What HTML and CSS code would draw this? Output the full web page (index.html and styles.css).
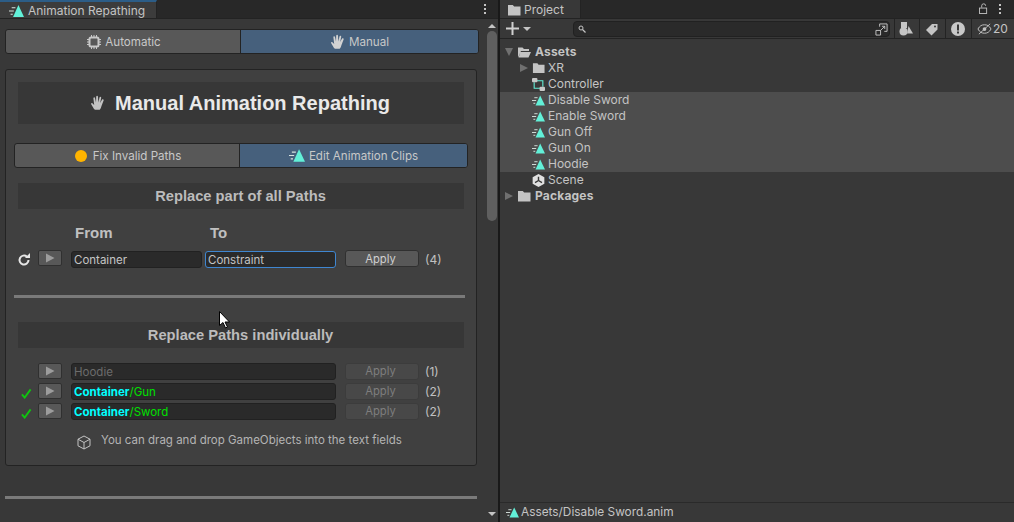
FILE: index.html
```html
<!DOCTYPE html>
<html lang="en">
<head>
<meta charset="utf-8">
<title>Animation Repathing</title>
<link rel="stylesheet" href="styles.css">
</head>
<body>
<svg class="defs" width="0" height="0">
  <symbol id="anim" viewBox="0 0 14 11">
    <path d="M8.800 0 14 11H3.800z" fill="#62f0d8"/>
    <path d="M2.500 2.500h3.500M0 5.500h4.500M1.500 8.500h2" stroke="#d8e4e0" stroke-width="1" fill="none"/>
  </symbol>
  <symbol id="hand" viewBox="0 0 16 16">
    <path d="M4 14 1.200 9.200c-.5-1 .8-1.700 1.400-.8L4.200 10 3.400 3.400c-.1-1.300 1.500-1.500 1.700-.2L6 7.500 6.200 1.800c.1-1.300 1.700-1.300 1.800 0L8.300 7.500 9.500 2.600c.3-1.200 1.900-.9 1.700.4L10.100 8l2-3.400c.6-1 2-.2 1.500.9L11.500 11c-.4 1.500-1 3-1.800 3.800H5z" fill="#d2d2d2"/>
  </symbol>
  <symbol id="folder" viewBox="0 0 14 12">
    <path d="M1 1h4.800l1.300 1.500H13.500V11.500H1z" fill="#c4c4c4"/>
  </symbol>
  <symbol id="play" viewBox="0 0 10 10">
    <path d="M1 .500l8.500 4.500L1 9.500z" fill="#9c9c9c"/>
  </symbol>
  <symbol id="check" viewBox="0 0 12 12">
    <path d="M1 7l3 3.500L10.500 1.500" stroke="#0fc40f" stroke-width="2" fill="none"/>
  </symbol>
</svg>

<div class="app">
  <section class="left">
    <header class="tabbar">
      <div class="tab tab-anim">
        <svg class="ic-anim ic-anim-tab"><use href="#anim"/></svg>
        <span>Animation Repathing</span>
      </div>
      <div class="kebab"><i></i><i></i><i></i></div>
    </header>
    <div class="left-body">
      <main class="content">
        <div class="toggle toggle-top">
          <div class="seg seg-a">
            <svg class="ic16" viewBox="0 0 16 16"><rect x="3.500" y="3.500" width="9" height="9" rx="1.500" fill="none" stroke="#c8c8c8" stroke-width="2"/><path d="M5.500 1v2M8 1v2M10.500 1v2M5.500 13v2M8 13v2M10.500 13v2M1 5.500h2M1 8h2M1 10.500h2M13 5.500h2M13 8h2M13 10.500h2" stroke="#c8c8c8"/></svg>
            <span>Automatic</span>
          </div>
          <div class="seg seg-on">
            <svg class="ic16"><use href="#hand"/></svg>
            <span>Manual</span>
          </div>
        </div>

        <div class="panel">
          <div class="title">
            <svg class="ic16 title-hand"><use href="#hand"/></svg>
            <span>Manual Animation Repathing</span>
          </div>

          <div class="toggle toggle-inner">
            <div class="seg seg-b">
              <i class="dot"></i>
              <span>Fix Invalid Paths</span>
            </div>
            <div class="seg seg-on">
              <svg class="ic-anim"><use href="#anim"/></svg>
              <span>Edit Animation Clips</span>
            </div>
          </div>

          <div class="sect">Replace part of all Paths</div>

          <div class="labels"><span class="lab-from">From</span><span>To</span></div>

          <div class="row row-all">
            <div class="lead">
              <svg class="ic-reload" viewBox="0 0 14 14"><path d="M11.500 7a4.500 4.500 0 1 1-1.500-3.300" fill="none" stroke="#e6e6e6" stroke-width="2"/><path d="M8 5h5V0z" fill="#e6e6e6"/></svg>
            </div>
            <button class="play"><svg class="ic-play"><use href="#play"/></svg></button>
            <div class="field field-half">Container</div>
            <div class="field field-half field-focus">Constraint</div>
            <button class="apply">Apply</button>
            <span class="count">(4)</span>
          </div>

          <div class="rule"></div>

          <div class="sect sect-2">Replace Paths individually</div>

          <div class="rows">
            <div class="row">
              <div class="lead"></div>
              <button class="play"><svg class="ic-play"><use href="#play"/></svg></button>
              <div class="field field-wide field-dim">Hoodie</div>
              <button class="apply apply-off">Apply</button>
              <span class="count">(1)</span>
            </div>
            <div class="row">
              <div class="lead"><svg class="ic-check"><use href="#check"/></svg></div>
              <button class="play"><svg class="ic-play"><use href="#play"/></svg></button>
              <div class="field field-wide"><b class="cy">Container</b><span class="gr">/Gun</span></div>
              <button class="apply apply-off">Apply</button>
              <span class="count">(2)</span>
            </div>
            <div class="row">
              <div class="lead"><svg class="ic-check"><use href="#check"/></svg></div>
              <button class="play"><svg class="ic-play"><use href="#play"/></svg></button>
              <div class="field field-wide"><b class="cy">Container</b><span class="gr">/Sword</span></div>
              <button class="apply apply-off">Apply</button>
              <span class="count">(2)</span>
            </div>
          </div>

          <div class="note">
            <svg class="ic-cube" viewBox="0 0 14 15"><path d="M7 1l6 3.200v6.600L7 14l-6-3.200V4.200zM1 4.200l6 3.300 6-3.300M7 7.500V14" fill="none" stroke="#c4c4c4"/></svg>
            <span>You can drag and drop GameObjects into the text fields</span>
          </div>
        </div>

        <div class="rule rule-out"></div>
      </main>
      <aside class="scroll">
        <i class="arrow-up"></i>
        <div class="thumb"></div>
        <i class="arrow-down"></i>
      </aside>
    </div>
  </section>

  <section class="right">
    <header class="tabbar">
      <div class="tab tab-proj">
        <svg class="ic-folder"><use href="#folder"/></svg>
        <span>Project</span>
      </div>
      <svg class="ic-lock" viewBox="0 0 10 12"><path d="M3 5V3a2.200 2.200 0 0 1 4.400 0" fill="none" stroke="#c4c4c4"/><rect x=".5" y="5.500" width="8" height="6" fill="none" stroke="#c4c4c4"/></svg>
      <div class="kebab kebab-r"><i></i><i></i><i></i></div>
    </header>
    <div class="toolbar">
      <div class="add">
        <svg class="ic-plus" viewBox="0 0 13 13"><path d="M6.500 0v13M0 6.500h13" stroke="#d0d0d0" stroke-width="2"/></svg>
        <i class="caret"></i>
      </div>
      <div class="search">
        <svg class="ic-mag" viewBox="0 0 8 8"><circle cx="3" cy="3" r="2" fill="none" stroke="#c4c4c4"/><path d="M4.500 4.500L7.500 7.500" stroke="#c4c4c4" stroke-width="1.300"/></svg>
        <svg class="ic-ext" viewBox="0 0 14 14"><path d="M5 4V1h8v8h-3M1 8h5v5H1zM6 8l4.500-4.500M7.500 3.500h3v3" fill="none" stroke="#c8c8c8"/></svg>
      </div>
      <div class="tb-btn tb-first">
        <svg class="ic-14" viewBox="0 0 14 14"><rect x="2" y="0" width="6" height="6" fill="#c4c4c4"/><circle cx="4.500" cy="9.500" r="4" fill="#c4c4c4"/><path d="M9.500 4l4.500 7.500H8z" fill="#c4c4c4"/></svg>
      </div>
      <div class="tb-btn">
        <svg class="ic-14" viewBox="0 0 14 14"><path d="M1 8l6-6h5.500v5.500l-6 6z" fill="#c4c4c4"/><circle cx="10" cy="4.500" r="1" fill="#383838"/></svg>
      </div>
      <div class="tb-btn">
        <svg class="ic-14" viewBox="0 0 14 14"><circle cx="7" cy="7" r="7" fill="#c8c8c8"/><rect x="6" y="2.500" width="2" height="6" fill="#383838"/><rect x="6" y="9.500" width="2" height="2" fill="#383838"/></svg>
      </div>
      <div class="tb-eye">
        <svg class="ic-eye" viewBox="0 0 16 12"><path d="M1 6c2-3.500 4-4.500 7-4.500S13 2.500 15 6c-2 3.500-4 4.500-7 4.500S3 9.500 1 6zM2 11.500L14 .5" fill="none" stroke="#c4c4c4"/><circle cx="8" cy="6" r="2" fill="#c4c4c4"/></svg>
        <span>20</span>
      </div>
    </div>
    <div class="tree">
      <div class="item item-root">
        <i class="tri tri-down"></i>
        <svg class="ic-open" viewBox="0 0 14 12"><path d="M1 11V1.500h4.500L7 3h5v2H4L1.500 10.500M3.500 6H14l-2.500 5.500H1.500z" fill="#c4c4c4"/></svg>
        <b>Assets</b>
      </div>
      <div class="item item-sub">
        <i class="tri tri-right"></i>
        <svg class="ic-folder"><use href="#folder"/></svg>
        <span>XR</span>
      </div>
      <div class="item item-leaf">
        <svg class="ic-asset" viewBox="0 0 12 12"><path d="M4 2.500h6V8M8 9.500H2V4" fill="none" stroke="#62f0d8"/><rect x="0" y="0" width="5" height="4" rx="1" fill="#c8c8c8"/><rect x="7" y="8" width="5" height="4" rx="1" fill="#c8c8c8"/></svg>
        <span>Controller</span>
      </div>
      <div class="selected">
        <div class="item item-leaf"><svg class="ic-anim-sm"><use href="#anim"/></svg><span>Disable Sword</span></div>
        <div class="item item-leaf"><svg class="ic-anim-sm"><use href="#anim"/></svg><span>Enable Sword</span></div>
        <div class="item item-leaf"><svg class="ic-anim-sm"><use href="#anim"/></svg><span>Gun Off</span></div>
        <div class="item item-leaf"><svg class="ic-anim-sm"><use href="#anim"/></svg><span>Gun On</span></div>
        <div class="item item-leaf"><svg class="ic-anim-sm"><use href="#anim"/></svg><span>Hoodie</span></div>
      </div>
      <div class="item item-leaf">
        <svg class="ic-asset" viewBox="0 0 12 12"><path d="M6 0l5.400 3v6L6 12 .6 9V3z" fill="#e0e0e0"/><path d="M6 6V2.500M6 6L2.800 7.900M6 6l3.200 1.900" stroke="#383838" stroke-width="1.300"/></svg>
        <span>Scene</span>
      </div>
      <div class="item item-root">
        <i class="tri tri-right tri-root"></i>
        <svg class="ic-folder"><use href="#folder"/></svg>
        <b>Packages</b>
      </div>
    </div>
    <footer class="status">
      <svg class="ic-anim-sm"><use href="#anim"/></svg>
      <span>Assets/Disable Sword.anim</span>
    </footer>
  </section>
</div>

<svg class="cursor" viewBox="0 0 12 18"><path d="M.5.500v14l3.500-3 2.500 5.500 2-1-2.500-5h4.500z" fill="#fff" stroke="#000"/></svg>
</body>
</html>
```
FILE: styles.css
```css
* { box-sizing: border-box; }
html, body { margin: 0; height: 522px; overflow: hidden; }
body { background: #383838; font: 12px/16px Inter, "Noto Sans", sans-serif; color: #c4c4c4; position: relative; }
.defs { position: absolute; }
svg { display: block; flex: none; }
.app { display: flex; height: 522px; }

.left { width: 500px; flex: none; display: flex; flex-direction: column; background: #383838; border-right: 2px solid #191919; }
.right { flex: 1; min-width: 0; display: flex; flex-direction: column; background: #383838; }

.tabbar { height: 19px; flex: none; background: #282828; display: flex; align-items: stretch; border-bottom: 1px solid #232323; }
.tab { display: flex; align-items: center; background: #3c3c3c; color: #c4c4c4; }
.tab-anim { width: 157px; padding: 1px 0 0 9px; gap: 4px; border-top: 2px solid #2c5d87; border-right: 1px solid #232323; }
.tab-proj { width: 81px; padding: 2px 0 0 7px; gap: 3px; border-right: 1px solid #232323; background: #383838; }
.ic-anim { width: 16px; height: 13px; }
.ic-anim-tab { width: 15px; height: 12px; }
.ic-anim-sm { width: 13px; height: 11px; margin-right: 3px; }
.ic-folder { width: 14px; height: 12px; }

.kebab { margin-left: auto; width: 14px; margin-right: 6px; display: flex; flex-direction: column; justify-content: center; align-items: center; gap: 2px; }
.kebab i { width: 2px; height: 2px; background: #c4c4c4; }
.kebab-r { margin-left: 0; margin-right: 7px; }
.ic-lock { width: 9px; height: 11px; margin: 3px 5px 0 auto; }

.left-body { flex: 1; display: flex; min-height: 0; }
.content { width: 485px; flex: none; padding: 10px 8px 0 5px; }

.toggle { display: flex; height: 25px; background: #585858; border: 1px solid #232323; border-radius: 3px; overflow: hidden; font-size: 11.6px; }
.toggle-top { width: 474px; }
.toggle-inner { width: 454px; margin: 19px 0 15px -4px; }
.seg { display: flex; align-items: center; justify-content: center; gap: 3px; color: #c8c8c8; }
.seg-a { width: 234px; flex: none; padding-left: 1px; }
.seg-b { width: 224px; flex: none; gap: 6px; padding-left: 2px; }
.seg-on { flex: 1; background: #46607c; border-left: 1px solid #232323; }
.toggle-inner .seg-on { gap: 4px; }
.dot { width: 12px; height: 12px; border-radius: 50%; background: #ffb400; }
.ic16 { width: 16px; height: 16px; }

.panel { margin-top: 15px; width: 472px; height: 397px; background: #404040; border: 1px solid #232323; border-radius: 3px; padding: 12px 12px 0 12px; }
.title { height: 42px; width: 446px; background: #373737; display: flex; align-items: center; justify-content: center; gap: 9px; padding-right: 2px; font: 700 20px/24px "Liberation Sans", Arial, sans-serif; color: #e9e9e9; }
.title-hand { opacity: .9; }

.sect { width: 446px; height: 26px; background: #373737; display: flex; align-items: center; justify-content: center; padding-right: 1px; font: 700 14.7px/18px "Liberation Sans", Arial, sans-serif; color: #bcbcbc; }
.sect-2 { margin-top: 24px; }

.labels { display: flex; margin: 15px 0 0 57px; font: 700 15px/17px "Liberation Sans", Arial, sans-serif; color: #c0c0c0; }
.lab-from { width: 135px; }

.row { display: flex; align-items: flex-start; height: 17px; margin-left: -3px; }
.row-all { margin-top: 10px; }
.row-all .play { margin-top: -1px; }
.row-all .apply { margin-top: -1px; padding-top: 1px; }
.lead { width: 23px; height: 17px; display: flex; align-items: center; justify-content: center; }
.ic-reload { width: 14px; height: 14px; margin-left: -5px; }
.ic-check { width: 11px; height: 11px; margin: 4px 0 0 -1px; }

button { font: inherit; padding: 0; margin: 0; }
.play { width: 24px; height: 16px; background: #585858; border: 1px solid #303030; border-radius: 2px; display: flex; align-items: center; justify-content: center; }
.ic-play { width: 10px; height: 10px; }
.field { height: 17px; margin-left: 9px; background: #2a2a2a; border: 1px solid #212121; border-radius: 3px; padding-left: 2px; font-size: 11.5px; line-height: 16px; color: #c4c4c4; white-space: nowrap; }
.field-half { width: 131px; }
.field-half + .field-half { margin-left: 3px; }
.field-focus { border-color: #3f86d0; }
.field-wide { width: 265px; }
.field-dim { color: #6c6c6c; }
.cy { color: #00ffff; font-weight: 700; }
.gr { color: #00e000; }
.apply { width: 74px; height: 17px; margin-left: 9px; padding-right: 3px; background: #585858; border: 1px solid #303030; border-radius: 3px; color: #d0d0d0; font-size: 11.2px; line-height: 15px; }
.apply-off { background: #484848; border-color: #3c3c3c; color: #7e7e7e; }
.count { margin-left: 6px; color: #c0c0c0; line-height: 17px; font-size: 12px; }

.rule { height: 3px; background: #7a7a7a; margin: 27px 0 0 -4px; width: 451px; }
.rule-out { margin: 30px 0 0 0; width: 472px; }

.rows { margin-top: 15px; display: flex; flex-direction: column; gap: 3px; }
.note { display: flex; align-items: flex-start; gap: 10px; margin: 12px 0 0 59px; color: #b4b4b4; font-size: 11.5px; line-height: 16px; }
.ic-cube { width: 14px; height: 15px; margin-top: 3px; }

.scroll { position: relative; flex: 1; display: flex; flex-direction: column; align-items: center; padding-top: 5px; }
.arrow-up { width: 0; height: 0; border: 4px solid transparent; border-top: 0; border-bottom: 4px solid #c4c4c4; }
.arrow-down { width: 0; height: 0; border: 4px solid transparent; border-bottom: 0; border-top: 4px solid #c4c4c4; margin-top: auto; margin-bottom: 6px; }
.thumb { width: 10px; height: 190px; margin-top: 3px; background: #5f5f5f; border-radius: 5px; }

.toolbar { height: 20px; flex: none; background: #383838; border-bottom: 1px solid #232323; display: flex; align-items: stretch; }
.add { width: 73px; display: flex; align-items: center; padding-left: 6px; gap: 3px; }
.ic-plus { width: 13px; height: 13px; }
.caret { width: 0; height: 0; border: 4px solid transparent; border-bottom: 0; border-top: 4px solid #c4c4c4; margin-left: 1px; }
.search { width: 317px; height: 16px; margin-top: 2px; background: #2a2a2a; border: 1px solid #212121; border-radius: 4px; display: flex; align-items: center; justify-content: space-between; padding: 0 1px 0 4px; }
.ic-mag { width: 8px; height: 8px; }
.ic-ext { width: 13px; height: 13px; }
.tb-btn { width: 26px; flex: none; display: flex; align-items: center; justify-content: center; padding-right: 1px; border-right: 1px solid #232323; }
.tb-first { margin-left: 4px; padding-right: 2px; border-left: 1px solid #232323; }
.ic-14 { width: 14px; height: 14px; }
.tb-eye { flex: 1; display: flex; align-items: center; gap: 1px; padding-left: 5px; font-size: 12px; }
.ic-eye { width: 15px; height: 12px; }

.tree { flex: 1; padding-top: 5px; }
.item { height: 16px; display: flex; align-items: center; white-space: nowrap; color: #c4c4c4; }
.item b { font-weight: 700; color: #c4c4c4; letter-spacing: .2px; }
.item-root { padding-left: 5px; gap: 4px; }
.item-sub { padding-left: 20px; gap: 3px; }
.item-sub .tri { margin-right: 1px; }
.item-sub .ic-folder { width: 13px; }
.item-leaf { padding-left: 32px; }
.selected { background: #4d4d4d; }
.ic-asset { width: 13px; height: 13px; margin-right: 3px; }
.tri { flex: none; }
.tri-down { width: 0; height: 0; border: 4.500px solid transparent; border-bottom: 0; border-top: 8px solid #707070; }
.tri-right { width: 0; height: 0; border: 4.500px solid transparent; border-right: 0; border-left: 8px solid #707070; }
.ic-open { width: 14px; height: 12px; }

.status { height: 20px; flex: none; background: #383838; border-top: 1px solid #2a2a2a; display: flex; align-items: center; padding: 0 0 1px 6px; font-size: 11.85px; }
.status .ic-anim-sm { margin-right: 2px; }

.cursor { position: absolute; left: 219px; top: 311px; width: 12px; height: 18px; }
```
